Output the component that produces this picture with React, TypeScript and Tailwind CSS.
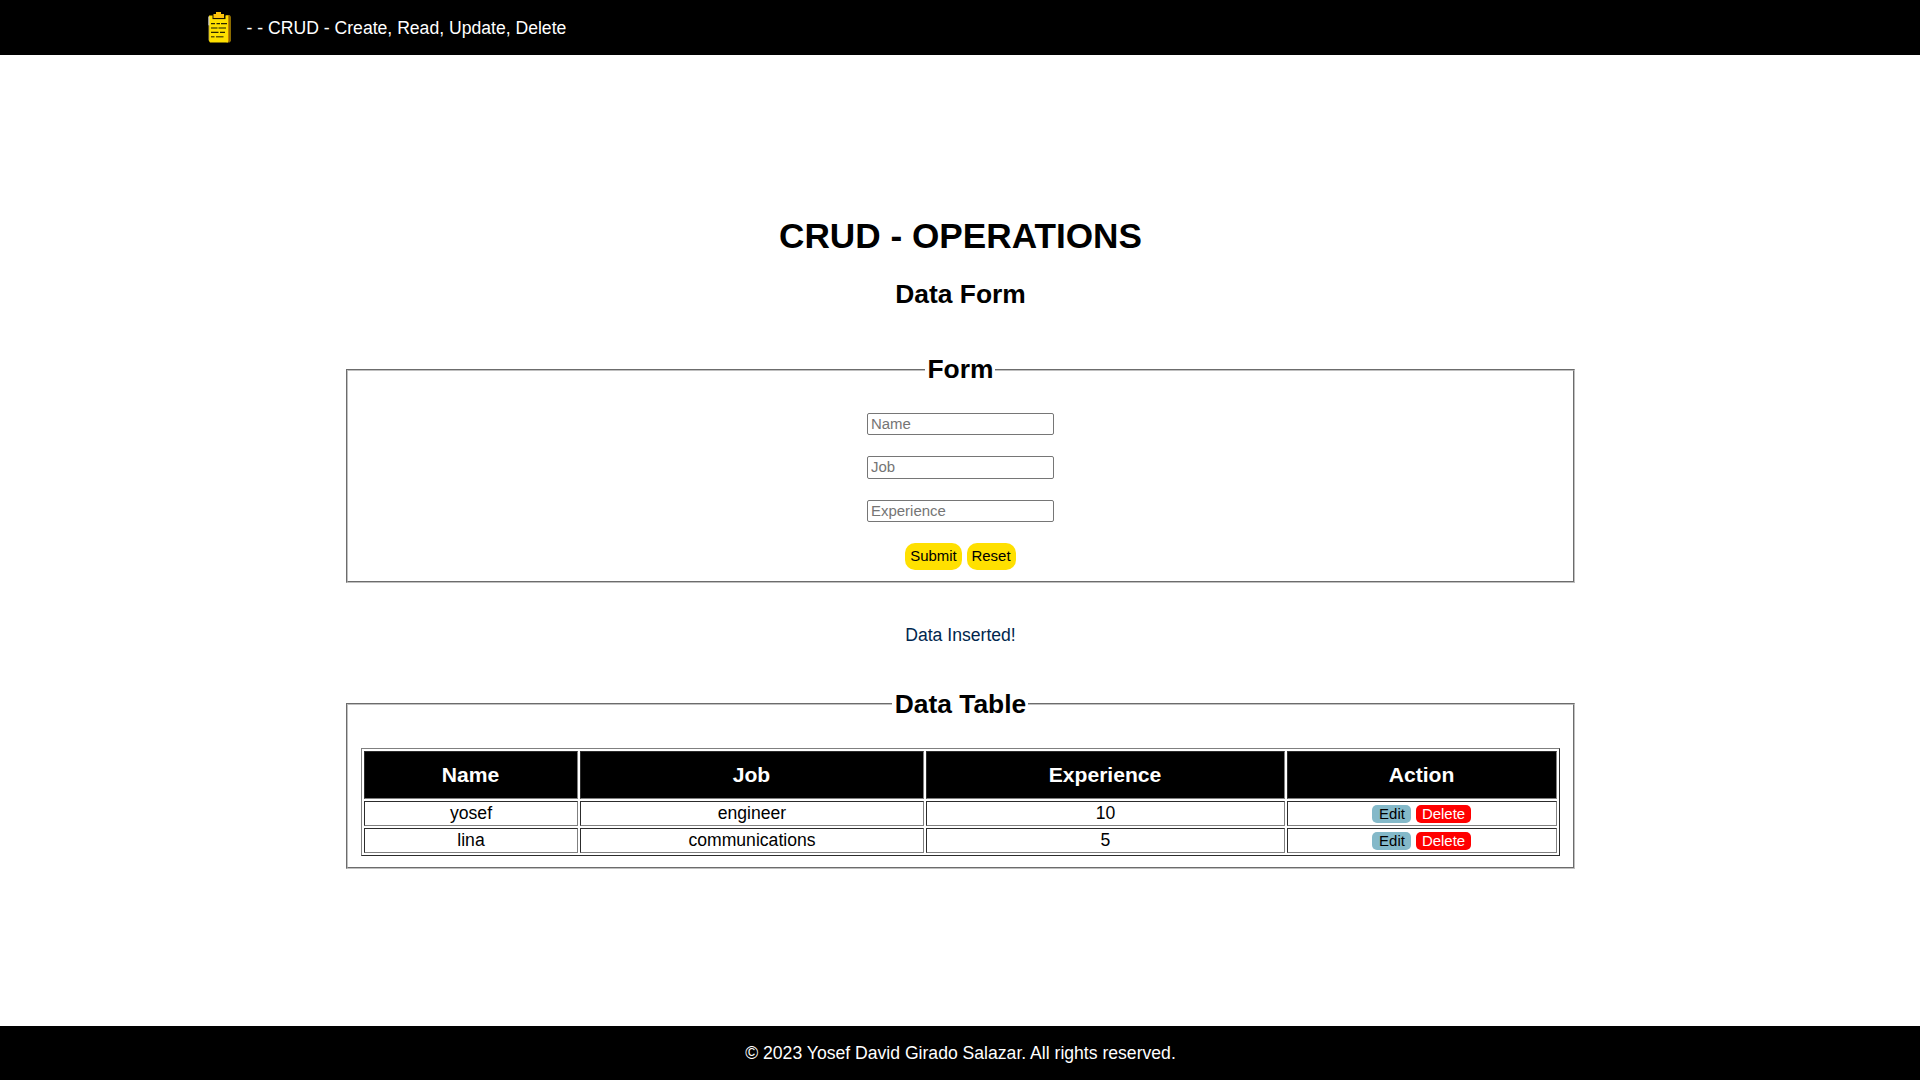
const rows = [
  { name: "yosef", job: "engineer", experience: "10" },
  { name: "lina", job: "communications", experience: "5" },
];

const cellBorder = "h-[25px] border border-[gray] text-center leading-5 [border-style:inset]";
const cell = `${cellBorder} pt-0 pr-0 pb-[2px] pl-px`;
const head = "h-[48px] border border-[gray] bg-black p-0 text-center text-[21.12px] leading-6 font-bold text-white [border-style:inset]";
const field =
  "block w-[187px] rounded-[2px] border border-[#767676] bg-white pt-0 pr-[3px] pb-[2px] pl-[3.5px] text-[14.96px] leading-[17px] text-black placeholder:text-[#757575] placeholder:opacity-100";
const box = "mx-auto block w-[1229px] border-2 border-[#c0c0c0] [border-style:groove]";
const legend = "mx-auto block h-[30px] pr-[2px] pl-[3px] text-[26.4px] font-bold";

function ClipboardIcon() {
  return (
    <svg width="26" height="33" viewBox="0 0 26 33">
      <path d="M18 4h3.500l1.500 1.500V30l-1.500 1.500h-3z" fill="#8a6a00" />
      <path d="M19.500 4.500h1.300v26h-1.300z" fill="#d98a00" />
      <path d="M1 4.500h19v27H2L1 30z" fill="#ffe000" />
      <path d="M.3 5.500h1.200v9H.3z" fill="#d8d8d8" />
      <path d="M.5 14.500h.8v15H.5z" fill="#a89a4a" />
      <path d="M4.500 3.500h13v4.600h-13z" fill="#1a1400" />
      <path d="M8 1h5v2h3v4H5.500V3H8z" fill="#ffc40c" />
      <g stroke="#2b2600" strokeWidth="1.200">
        <path d="M3 12.600h4M8.500 12.600h3.500M13 12.600h6" />
        <path d="M3 17h6.500M10.500 17h7.500" stroke="#665a00" strokeWidth="1.600" />
        <path d="M3 21.400h7.500M12 21.400h5" />
        <path d="M3 25.700h3.500M8 25.700h7.500" stroke="#665a00" strokeWidth="1.600" />
      </g>
    </svg>
  );
}

export default function App() {
  return (
    <div className="flex h-[1080px] flex-col overflow-hidden bg-white font-['Liberation_Sans',Arial,sans-serif] text-[17.6px] leading-5 text-black">
      <header className="flex h-[55px] shrink-0 items-center bg-black pl-[208px] text-white">
        <ClipboardIcon />
        <span className="ml-[12.6px]">- - CRUD - Create, Read, Update, Delete</span>
      </header>

      <main className="flex-1 pt-[161px]">
        <h1 className="pl-px text-center text-[35.2px] leading-10 font-bold">CRUD - OPERATIONS</h1>
        <h2 className="mt-[23px] pl-px text-center text-[26.4px] leading-[30px] font-bold">Data Form</h2>

        <fieldset className={`${box} mt-[46px] h-[228px]`}>
          <legend className={`${legend} leading-[28px]`}>Form</legend>
          <form className="flex flex-col items-center pt-[28px]" onSubmit={(e) => e.preventDefault()}>
            <input className={`${field} h-[22px]`} placeholder="Name" />
            <input className={`${field} mt-[21px] h-[23px]`} placeholder="Job" />
            <input className={`${field} mt-[21px] h-[22px]`} placeholder="Experience" />
            <div className="mt-[21px] flex gap-[5px] text-[14.96px] leading-[17px]">
              <button type="submit" className="h-[27px] w-[57px] rounded-[10px] bg-[#ffe000] pb-[2px] pl-px">Submit</button>
              <button type="reset" className="h-[27px] w-[49px] rounded-[10px] bg-[#ffe000] pb-[2px]">Reset</button>
            </div>
          </form>
        </fieldset>

        <p className="mt-[42px] pl-px text-center text-[#00264d]">Data Inserted!</p>

        <fieldset className={`${box} mt-[44px] h-[180px]`}>
          <legend className={`${legend} leading-[30px]`}>Data Table</legend>
          <table className="mx-auto mt-[29px] w-[1199px] table-fixed border-separate border-spacing-[2px] border border-[gray] [border-style:outset]">
            <colgroup>
              <col className="w-[214px]" />
              <col className="w-[344px]" />
              <col className="w-[359px]" />
              <col className="w-[270px]" />
            </colgroup>
            <thead>
              <tr>
                <th className={head}>Name</th>
                <th className={head}>Job</th>
                <th className={head}>Experience</th>
                <th className={head}>Action</th>
              </tr>
            </thead>
            <tbody>
              {rows.map((row) => (
                <tr key={row.name}>
                  <td className={cell}>{row.name}</td>
                  <td className={cell}>{row.job}</td>
                  <td className={cell}>{row.experience}</td>
                  <td className={`${cellBorder} p-0`}>
                    <div className="flex justify-center gap-[5px] text-[14.96px] leading-[17px]">
                      <button className="h-[18px] w-[39px] rounded-[5px] bg-[#84b9c9] pl-px">Edit</button>
                      <button className="h-[18px] w-[55px] rounded-[5px] bg-[#ff0000] text-white">Delete</button>
                    </div>
                  </td>
                </tr>
              ))}
            </tbody>
          </table>
        </fieldset>
      </main>

      <footer className="flex h-[54px] shrink-0 items-center justify-center bg-black pl-px text-white">
        © 2023 Yosef David Girado Salazar. All rights reserved.
      </footer>
    </div>
  );
}
